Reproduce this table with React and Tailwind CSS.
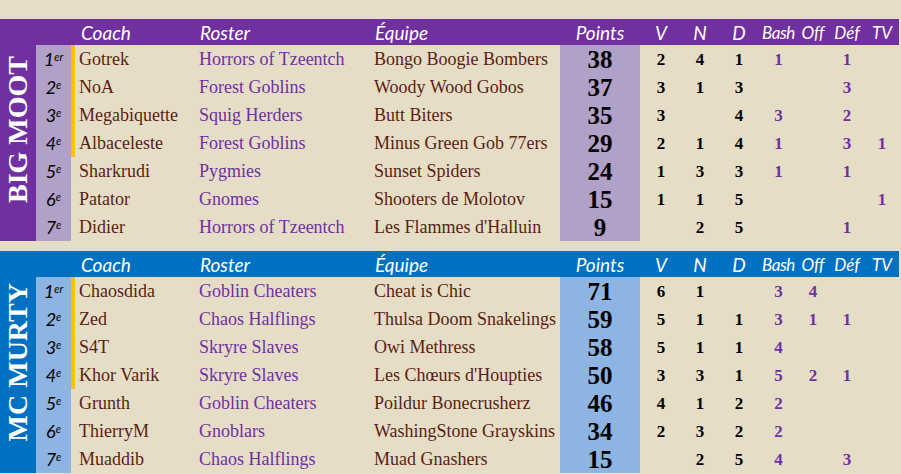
import React from "react";

const sections = [
  {
    name: "BIG MOOT",
    dark: "bg-[#7030a0]",
    light: "bg-[#b1a0c7]",
    rows: [
      ["1", "er", "Gotrek", "Horrors of Tzeentch", "Bongo Boogie Bombers", 38, 2, 4, 1, 1, "", 1, ""],
      ["2", "e", "NoA", "Forest Goblins", "Woody Wood Gobos", 37, 3, 1, 3, "", "", 3, ""],
      ["3", "e", "Megabiquette", "Squig Herders", "Butt Biters", 35, 3, "", 4, 3, "", 2, ""],
      ["4", "e", "Albaceleste", "Forest Goblins", "Minus Green Gob 77ers", 29, 2, 1, 4, 1, "", 3, 1],
      ["5", "e", "Sharkrudi", "Pygmies", "Sunset Spiders", 24, 1, 3, 3, 1, "", 1, ""],
      ["6", "e", "Patator", "Gnomes", "Shooters de Molotov", 15, 1, 1, 5, "", "", "", 1],
      ["7", "e", "Didier", "Horrors of Tzeentch", "Les Flammes d'Halluin", 9, "", 2, 5, "", "", 1, ""],
    ],
  },
  {
    name: "MC MURTY",
    dark: "bg-[#0070c0]",
    light: "bg-[#8db4e2]",
    rows: [
      ["1", "er", "Chaosdida", "Goblin Cheaters", "Cheat is Chic", 71, 6, 1, "", 3, 4, "", ""],
      ["2", "e", "Zed", "Chaos Halflings", "Thulsa Doom Snakelings", 59, 5, 1, 1, 3, 1, 1, ""],
      ["3", "e", "S4T", "Skryre Slaves", "Owi Methress", 58, 5, 1, 1, 4, "", "", ""],
      ["4", "e", "Khor Varik", "Skryre Slaves", "Les Chœurs d'Houpties", 50, 3, 3, 1, 5, 2, 1, ""],
      ["5", "e", "Grunth", "Goblin Cheaters", "Poildur Bonecrusherz", 46, 4, 1, 2, 2, "", "", ""],
      ["6", "e", "ThierryM", "Gnoblars", "WashingStone Grayskins", 34, 2, 3, 2, 2, "", "", ""],
      ["7", "e", "Muaddib", "Chaos Halflings", "Muad Gnashers", 15, "", 2, 5, 4, "", 3, ""],
    ],
  },
];

const cols =
  "grid grid-cols-[35px_4px_124px_175px_186px_80px_42px_36px_42px_37px_32px_36px_34px]";
const hand = "font-['Lato','Open_Sans',sans-serif] italic";
const serif = "font-['Liberation_Serif',serif]";

const Section = ({ s }) => (
  <div className="flex h-[222px] w-[899px]">
    {/* rotated pool name */}
    <div className={`flex w-[36px] shrink-0 items-center justify-center ${s.dark}`}>
      <span
        className={`rotate-180 [writing-mode:vertical-rl] whitespace-nowrap text-[28px] font-bold leading-none text-white ${serif}`}
      >
        {s.name}
      </span>
    </div>

    <div className="flex flex-col">
      <div
        className={`${cols} h-[26px] grid-rows-[26px] items-center text-[19px] leading-none text-white ${s.dark} ${hand}`}
      >
        <span />
        <span />
        <span className="pl-[6px]">Coach</span>
        <span className="pl-px">Roster</span>
        <span className="pl-px">Équipe</span>
        <span className="text-center">Points</span>
        <span className="text-center">V</span>
        <span className="text-center">N</span>
        <span className="text-center">D</span>
        <span className="text-center text-[17px] tracking-tight">Bash</span>
        <span className="text-center text-[17px]">Off</span>
        <span className="text-center text-[17px]">Déf</span>
        <span className="text-center text-[17px]">TV</span>
      </div>

      {s.rows.map((r, i) => (
        <div key={i} className={`${cols} h-[28px] grid-rows-[28px] items-stretch leading-none`}>
          <div className={`flex items-center justify-center text-[18px] text-black ${s.light} ${hand}`}>
            <span>
              {r[0]}
              <sup className="text-[11px]">{r[1]}</sup>
            </span>
          </div>
          <div className={i < 4 ? "bg-[#ffc000]" : ""} />
          <div className={`flex items-center pl-[4px] text-[18px] text-[#5c1d12] ${serif}`}>{r[2]}</div>
          <div className={`flex items-center text-[18px] text-[#7030a0] ${serif}`}>{r[3]}</div>
          <div className={`flex items-center text-[18px] text-[#5c1d12] ${serif}`}>{r[4]}</div>
          <div className={`flex items-center justify-center text-[25px] font-bold text-black ${s.light} ${serif}`}>
            {r[5]}
          </div>
          {r.slice(6).map((v, j) => (
            <div
              key={j}
              className={`flex items-center justify-center text-[17px] font-bold ${serif} ${
                j < 3 ? "text-black" : "text-[#7030a0]"
              }`}
            >
              {v}
            </div>
          ))}
        </div>
      ))}
    </div>
  </div>
);

export default function App() {
  return (
    <div className="flex min-h-[474px] w-[901px] flex-col gap-[10px] bg-[#e5ddc6] pt-[19px]">
      {sections.map((s) => (
        <Section key={s.name} s={s} />
      ))}
    </div>
  );
}
